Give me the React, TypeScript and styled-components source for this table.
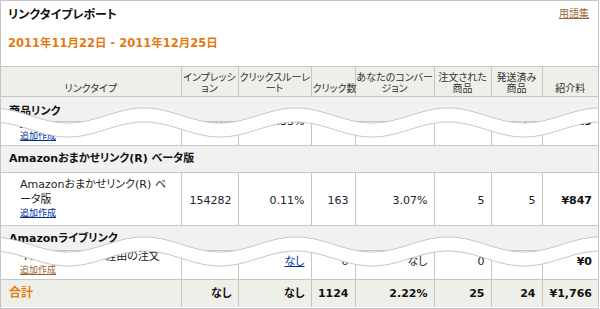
import styled, { createGlobalStyle } from 'styled-components'

const GlobalStyle = createGlobalStyle`
  html, body {
    margin: 0;
    padding: 0;
    background: #fff;
  }
  body {
    font-family: "DejaVu Sans", "Noto Sans CJK JP", sans-serif;
    font-size: 11px;
    color: #222;
    font-feature-settings: "palt";
  }
`

type Value = string | { text: string; link: true }

type ReportRow = {
  section: string
  sectionPad: [number, number]
  name: string
  nameIsLink?: boolean
  addTone: 'blue' | 'brown'
  shown: number
  padBottom: number
  valueBottom: number
  values: Value[]
  fee: string
}

// rows shorter than their content are cut at the top; the tear hides the seam
const rows: ReportRow[] = [
  {
    section: '商品リンク',
    sectionPad: [7, 1],
    name: 'テキストと画像リンク(カスタム形式)',
    nameIsLink: true,
    addTone: 'blue',
    shown: 23,
    padBottom: 2,
    valueBottom: 16,
    values: ['289316', '0.33%', '961', '2.08%', '20', '19'],
    fee: '¥919',
  },
  {
    section: 'Amazonおまかせリンク(R) ベータ版',
    sectionPad: [5, 5],
    name: 'Amazonおまかせリンク(R) ベータ版',
    addTone: 'blue',
    shown: 52,
    padBottom: 5,
    valueBottom: 17,
    values: ['154282', '0.11%', '163', '3.07%', '5', '5'],
    fee: '¥847',
  },
  {
    section: 'Amazonライブリンク',
    sectionPad: [5, 3],
    name: 'インフォメーション経由の注文',
    addTone: 'brown',
    shown: 28,
    padBottom: 2,
    valueBottom: 10,
    values: ['0', { text: 'なし', link: true }, '0', 'なし', '0', '0'],
    fee: '¥0',
  },
]

const headers = [
  ['リンクタイプ'],
  ['インプレッシ', 'ョン'],
  ['クリックスルーレ', 'ート'],
  ['クリック数'],
  ['あなたのコンバー', 'ジョン'],
  ['注文された', '商品'],
  ['発送済み', '商品'],
  ['紹介料'],
]

const colWidths = [180, 57, 73, 44, 79, 57, 51, 56]

const totals = ['なし', 'なし', '1124', '2.22%', '25', '24', '¥1,766']

const Tear = ({ top }: { top: number }) => {
  const pts: [number, number][] = []
  for (let x = -4; x <= 604; x += 3) {
    pts.push([x, 11.5 - 7.5 * Math.cos((2 * Math.PI * (x - 144)) / 152)])
  }
  const upper = pts.map(([x, y], i) => `${i ? 'L' : 'M'}${x} ${y.toFixed(2)}`).join(' ')
  const lower = pts.map(([x, y], i) => `${i ? 'L' : 'M'}${x} ${(y + 14).toFixed(2)}`).join(' ')
  const back = [...pts].reverse().map(([x, y]) => `L${x} ${(y + 14).toFixed(2)}`).join(' ')
  return (
    <TearSvg $top={top} width="600" height="36" viewBox="0 0 600 36">
      <path d={`${upper} ${back} Z`} fill="#fff" />
      <path d={upper} fill="none" stroke="#c8c8c8" strokeWidth="1" />
      <path d={lower} fill="none" stroke="#c8c8c8" strokeWidth="1" />
    </TearSvg>
  )
}

const App = () => {
  return (
    <>
      <GlobalStyle />
      <Page>
        <TopBar>
          <Title>リンクタイプレポート</Title>
          <Glossary href="#">用語集</Glossary>
        </TopBar>
        <DateRange>2011年11月22日 - 2011年12月25日</DateRange>

        <Report>
          <colgroup>
            {colWidths.map((w, i) => (
              <col key={i} style={{ width: w }} />
            ))}
          </colgroup>
          <thead>
            <tr>
              {headers.map((lines, i) => (
                <HeadCell key={i}>
                  {lines.map((l, j) => (
                    <HeadLine key={j}>{l}</HeadLine>
                  ))}
                </HeadCell>
              ))}
            </tr>
          </thead>
          <tbody>
            {rows.map((r) => (
              <RowGroup key={r.section} row={r} />
            ))}
            <tr>
              <TotalLabel>合計</TotalLabel>
              {totals.map((t, i) => (
                <TotalCell key={i}>{t}</TotalCell>
              ))}
            </tr>
          </tbody>
        </Report>

        <Tear top={104} />
        <Tear top={233} />
      </Page>
    </>
  )
}

const RowGroup = ({ row }: { row: ReportRow }) => (
  <>
    <tr>
      <SectionCell colSpan={8} $top={row.sectionPad[0]} $bottom={row.sectionPad[1]}>
        {row.section}
      </SectionCell>
    </tr>
    <tr>
      <DataCell>
        <Clip $h={row.shown} $pb={row.padBottom} $pl={19}>
          {row.nameIsLink ? <NameLink href="#">{row.name}</NameLink> : <Name>{row.name}</Name>}
          <AddLink href="#" $tone={row.addTone}>
            追加作成
          </AddLink>
        </Clip>
      </DataCell>
      {row.values.map((v, i) => (
        <DataCell key={i}>
          <Clip $h={row.shown} $pb={row.valueBottom} $num>
            {typeof v === 'string' ? <Num>{v}</Num> : <Num><ValueLink href="#">{v.text}</ValueLink></Num>}
          </Clip>
        </DataCell>
      ))}
      <DataCell>
        <Clip $h={row.shown} $pb={row.valueBottom} $num>
          <Num $bold>{row.fee}</Num>
        </Clip>
      </DataCell>
    </tr>
  </>
)

export default App

const Page = styled.div`
  position: relative;
  box-sizing: border-box;
  width: 599px;
  height: 309px;
  border: 1px solid #c6c6c6;
  overflow: hidden;
`

const TopBar = styled.div`
  display: flex;
  justify-content: space-between;
  align-items: flex-start;
  padding: 6px 9px 0 7px;
`

const Title = styled.h1`
  margin: 0;
  font-size: 12px;
  line-height: 16px;
  font-weight: bold;
  color: #111;
`

const Glossary = styled.a`
  font-size: 10px;
  line-height: 14px;
  color: #996633;
  text-decoration: underline;
`

const DateRange = styled.div`
  margin: 12px 0 0 7px;
  font-size: 11.5px;
  line-height: 16px;
  font-weight: bold;
  color: #e47911;
`

const Report = styled.table`
  margin-top: 15px;
  width: 597px;
  table-layout: fixed;
  border-collapse: collapse;

  td,
  th {
    border: 1px solid #c6c6c6;
  }
  tr > :first-child {
    border-left: none;
  }
  tr > :last-child {
    border-right: none;
  }
  tbody tr:last-child > * {
    border-bottom: none;
  }
`

const HeadCell = styled.th`
  height: 27px;
  padding: 0 1px 2px;
  background: #efefe9;
  font-weight: normal;
  font-size: 10px;
  line-height: 11px;
  color: #333;
  text-align: center;
  vertical-align: bottom;
`

const HeadLine = styled.span`
  display: block;
  white-space: nowrap;
`

const SectionCell = styled.td<{ $top: number; $bottom: number }>`
  padding: ${(p) => p.$top}px 8px ${(p) => p.$bottom}px;
  background: #f1f1f1;
  font-weight: bold;
  line-height: 16px;
  color: #111;
`

const DataCell = styled.td`
  padding: 0;
  vertical-align: bottom;
`

const Clip = styled.div<{ $h: number; $pb: number; $pl?: number; $num?: boolean }>`
  box-sizing: border-box;
  height: ${(p) => p.$h}px;
  overflow: hidden;
  display: flex;
  flex-direction: column;
  justify-content: flex-end;
  padding: 0 6px ${(p) => p.$pb}px ${(p) => p.$pl ?? 2}px;
  text-align: ${(p) => (p.$num ? 'right' : 'left')};
`

const Name = styled.div`
  line-height: 15px;
  color: #222;
`

const NameLink = styled.a`
  display: block;
  line-height: 15px;
  color: #003399;
  text-decoration: underline;
`

const AddLink = styled.a<{ $tone: 'blue' | 'brown' }>`
  display: block;
  font-size: 9px;
  line-height: 13px;
  color: ${(p) => (p.$tone === 'blue' ? '#003399' : '#996633')};
  text-decoration: underline;
`

const Num = styled.div<{ $bold?: boolean }>`
  flex-shrink: 0;
  line-height: 15px;
  white-space: nowrap;
  font-weight: ${(p) => (p.$bold ? 'bold' : 'normal')};
  color: ${(p) => (p.$bold ? '#111' : '#222')};
`

const ValueLink = styled.a`
  color: #003399;
  text-decoration: underline;
`

const TotalLabel = styled.td`
  padding: 6px 8px;
  background: #efefe9;
  font-weight: bold;
  font-size: 12px;
  line-height: 15px;
  color: #e47911;
`

const TotalCell = styled.td`
  padding: 6px 6px 6px 2px;
  background: #efefe9;
  font-weight: bold;
  line-height: 15px;
  text-align: right;
  color: #111;
`

const TearSvg = styled.svg<{ $top: number }>`
  position: absolute;
  left: -1px;
  top: ${(p) => p.$top - 1}px;
  pointer-events: none;
`
